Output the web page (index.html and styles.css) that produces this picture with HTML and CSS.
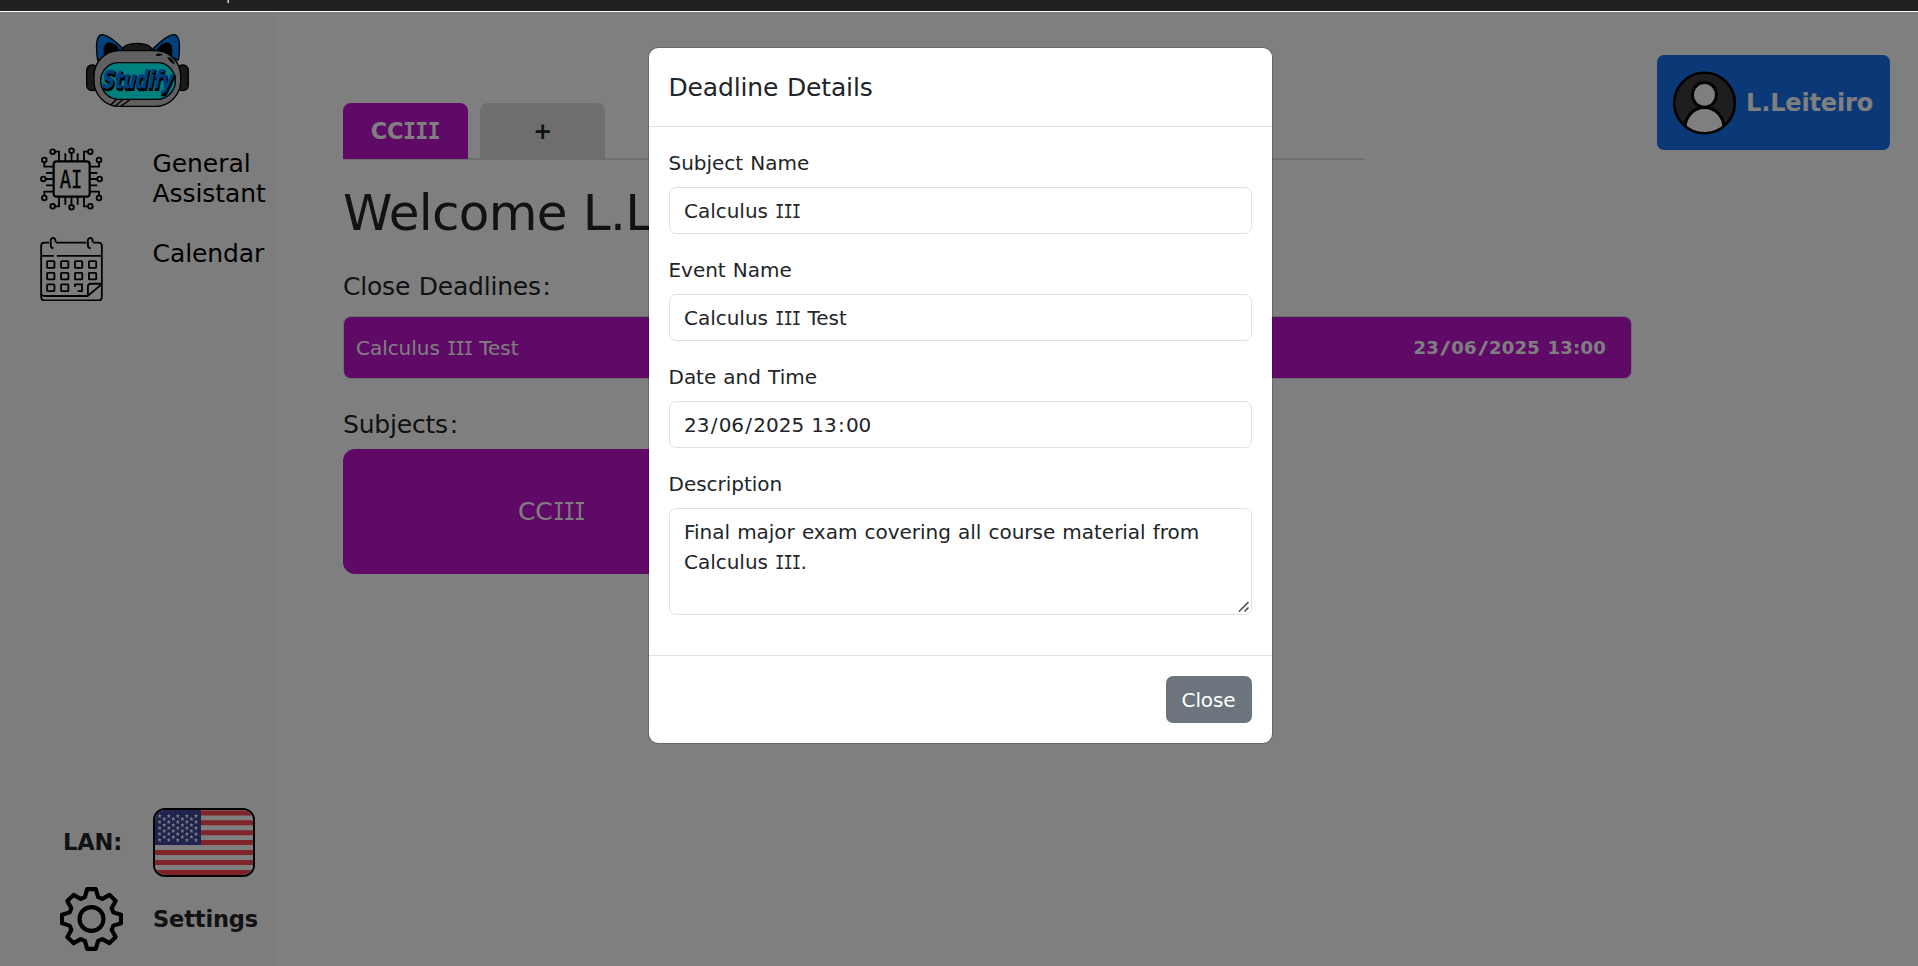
FILE: index.html
```html
<!DOCTYPE html>
<html lang="en">
<head>
<meta charset="utf-8">
<title>Studify</title>
<link rel="stylesheet" href="styles.css">
</head>
<body>
<div class="topbar"><span class="caret"></span></div>
<div class="app">
  <aside class="sidebar">
    <svg class="logo" viewBox="78 40 309 222" role="img" aria-label="Studify logo">
      <g stroke="#000" stroke-width="4" stroke-linejoin="round">
        <path d="M184 96 Q186 72 232 71 Q276 72 278 96Z" fill="#333"/>
        <path d="M113 122 Q104 62 118 48 Q134 34 190 88Z" fill="#0080f8"/>
        <path d="M355 122 Q364 62 350 48 Q334 34 278 88Z" fill="#0080f8"/>
        <path d="M134 112 Q128 66 152 71 Q172 76 180 98Z" fill="#000"/>
        <path d="M334 112 Q340 66 316 71 Q298 76 288 98Z" fill="#000"/>
        <rect x="80" y="136" width="34" height="77" rx="16" fill="#333"/>
        <rect x="351" y="136" width="34" height="77" rx="16" fill="#333"/>
        <rect x="102" y="93" width="260" height="167" rx="76" fill="#c0c0c0"/>
        <rect x="122" y="129" width="224" height="110" rx="54" fill="#0ff"/>
      </g>
      <path d="M288 104 q10-5 20 0 q-3 8-20 4z M321 111 q18 2 24 23 q-14-3-24-23z" fill="#111"/>
      <path d="M151 257l18-17M166 259l22-19M182 260l28-20" stroke="#000" stroke-width="4"/>
      <g transform="translate(126 205) skewX(-3)" class="logo-text">
        <text x="3" y="6" textLength="212" lengthAdjust="spacingAndGlyphs" fill="#000" stroke="#000" stroke-width="6">Studify</text>
        <text x="0" y="0" textLength="212" lengthAdjust="spacingAndGlyphs" fill="#0080f8" stroke="#0080f8" stroke-width="1">Studify</text>
      </g>
    </svg>
    <nav class="menu">
      <a class="menu-item">
        <svg class="menu-icon" viewBox="30 20 189 190" fill="none" stroke="#000" stroke-width="5.500">
          <rect x="71" y="62" width="108" height="106" rx="9" stroke-width="6.500"/>
          <circle cx="68" cy="33" r="7"/><circle cx="124.500" cy="30" r="7"/><circle cx="181" cy="33" r="7"/>
          <circle cx="68" cy="197" r="7"/><circle cx="124.500" cy="200" r="7"/><circle cx="181" cy="197" r="7"/>
          <circle cx="43" cy="58" r="7"/><circle cx="40" cy="115" r="7"/><circle cx="43" cy="172" r="7"/>
          <circle cx="207" cy="58" r="7"/><circle cx="209" cy="115" r="7"/><circle cx="207" cy="172" r="7"/>
          <path d="M75 33h12v28M106 38v23M124.500 37v24M143 38v23M174 33h-12v28M75 197h12v-28M106 192v-23M124.500 193v-24M143 192v-23M174 197h-12v-28"/>
          <path d="M43 65v13h28M48 97h23M47 115h24M48 134h23M43 165v-12h28M207 65v13h-28M202 97h-23M202 115h-23M202 134h-23M207 165v-12h-28"/>
          <text x="89" y="143" class="chip-text" textLength="68" lengthAdjust="spacingAndGlyphs">AI</text>
        </svg>
        <span>General Assistant</span>
      </a>
      <a class="menu-item">
        <svg class="menu-icon" viewBox="30 290 189 193" fill="none" stroke="#000" stroke-width="5.500">
          <path d="M57 307H43q-10 0-10 10V470q0 11 10 11H206q10 0 10-11V317q0-10-10-10H190M78 307h92M33 347h38M80 347h136"/>
          <path d="M76 306q2-13-7-13t-7 13v10q0 7 8 8M188 306q2-13-7-13t-7 13v10q0 7 8 8"/>
          <path d="M33 460q2 8 10 8H173L216 432M174 467V440q0-9 9-9h33"/>
          <path d="M135 441v-8h21v20h-13"/>
          <g>
            <rect x="51" y="363" width="22" height="20" rx="2"/><rect x="93" y="363" width="22" height="20" rx="2"/><rect x="135" y="363" width="22" height="20" rx="2"/><rect x="177" y="363" width="22" height="20" rx="2"/>
            <rect x="51" y="398" width="22" height="20" rx="2"/><rect x="93" y="398" width="22" height="20" rx="2"/><rect x="135" y="398" width="22" height="20" rx="2"/><rect x="177" y="398" width="22" height="20" rx="2"/>
            <rect x="51" y="433" width="22" height="20" rx="2"/><rect x="93" y="433" width="22" height="20" rx="2"/>
          </g>
        </svg>
        <span>Calendar</span>
      </a>
    </nav>
    <div class="side-foot">
      <div class="foot-row">
        <b class="lan">LAN:</b>
        <svg class="flag" viewBox="0 0 98 65">
          <defs><path id="st" fill="#fff" d="M0-2.200L.6-.7 2.100-.7 .9.300 1.400 1.900 0 1-1.400 1.900-.9.300-2.100-.7-.6-.7Z"/></defs>
          <rect width="98" height="65" fill="#fff"/>
          <path d="M0 3H98M0 12.800H98M0 22.700H98M0 32.600H98M0 42.500H98M0 52.400H98M0 62.400H98" stroke="#ff4b55" stroke-width="5"/>
          <rect width="46" height="35" fill="#41479b"/>
          <use href="#st" x="4.700" y="6"/><use href="#st" x="13.800" y="6"/><use href="#st" x="22.800" y="6"/><use href="#st" x="31.900" y="6"/><use href="#st" x="41" y="6"/>
          <use href="#st" x="9.200" y="9"/><use href="#st" x="18.300" y="9"/><use href="#st" x="27.400" y="9"/><use href="#st" x="36.400" y="9"/>
          <use href="#st" x="4.700" y="12"/><use href="#st" x="13.800" y="12"/><use href="#st" x="22.800" y="12"/><use href="#st" x="31.900" y="12"/><use href="#st" x="41" y="12"/>
          <use href="#st" x="9.200" y="15"/><use href="#st" x="18.300" y="15"/><use href="#st" x="27.400" y="15"/><use href="#st" x="36.400" y="15"/>
          <use href="#st" x="4.700" y="18"/><use href="#st" x="13.800" y="18"/><use href="#st" x="22.800" y="18"/><use href="#st" x="31.900" y="18"/><use href="#st" x="41" y="18"/>
          <use href="#st" x="9.200" y="21"/><use href="#st" x="18.300" y="21"/><use href="#st" x="27.400" y="21"/><use href="#st" x="36.400" y="21"/>
          <use href="#st" x="4.700" y="24"/><use href="#st" x="13.800" y="24"/><use href="#st" x="22.800" y="24"/><use href="#st" x="31.900" y="24"/><use href="#st" x="41" y="24"/>
          <use href="#st" x="9.200" y="27"/><use href="#st" x="18.300" y="27"/><use href="#st" x="27.400" y="27"/><use href="#st" x="36.400" y="27"/>
          <use href="#st" x="4.700" y="30"/><use href="#st" x="13.800" y="30"/><use href="#st" x="22.800" y="30"/><use href="#st" x="31.900" y="30"/><use href="#st" x="41" y="30"/>
        </svg>
      </div>
      <div class="foot-row">
        <svg class="gear" viewBox="-95 -96 190 192" fill="none" stroke="#000" stroke-width="12.500" stroke-linejoin="round">
          <path d="M-20-66L-13-90H13L20-66L32.500-60.800L54.400-72.800L72.800-54.400L60.800-32.500L66-20L89-13V13L66 20L60.800 32.500L72.800 54.400L54.400 72.800L32.500 60.800L20 66L13 90H-13L-20 66L-32.500 60.800L-54.400 72.800L-72.800 54.400L-60.800 32.500L-66 20L-89 13V-13L-66-20L-60.800-32.500L-72.800-54.400L-54.400-72.800L-32.500-60.800Z"/>
          <circle r="36"/>
        </svg>
        <b>Settings</b>
      </div>
    </div>
  </aside>

  <main class="main">
    <div class="tabs">
      <div class="tab active">CC<span class="num">III</span></div>
      <div class="tab">+</div>
    </div>
    <h1>Welcome L.Leiteiro</h1>
    <h2 class="h-deadlines">Close Deadlines<span class="pt">:</span></h2>
    <div class="deadline">
      <span>Calculus <span class="num">III</span> Test</span>
      <b>23<i>/</i>06<i>/</i>2025 13:00</b>
    </div>
    <h2 class="h-subjects">Subjects<span class="pt">:</span></h2>
    <div class="subject">CC<span class="num">III</span></div>
  </main>

  <button class="profile">
    <svg class="avatar" viewBox="0 0 63 64">
      <defs><clipPath id="face"><circle cx="31.500" cy="32" r="30.500"/></clipPath></defs>
      <circle cx="31.500" cy="32" r="30.500" fill="#3c3c3c"/>
      <g clip-path="url(#face)" fill="#fff" stroke="#000" stroke-width="3">
        <ellipse cx="31.500" cy="57" rx="19.500" ry="20.500"/>
        <ellipse cx="31.500" cy="23.800" rx="12" ry="12.300"/>
      </g>
      <circle cx="31.500" cy="32" r="30.300" fill="none" stroke="#000" stroke-width="2.600"/>
    </svg>
    <b>L.Leiteiro</b>
  </button>

  <div class="backdrop">
    <section class="modal">
      <header class="modal-head">Deadline Details</header>
      <div class="modal-body">
        <div class="field"><label>Subject Name</label><div class="control">Calculus <span class="num">III</span></div></div>
        <div class="field"><label>Event Name</label><div class="control">Calculus <span class="num">III</span> Test</div></div>
        <div class="field"><label>Date and Time</label><div class="control">23<i>/</i>06<i>/</i>2025 13<i>:</i>00</div></div>
        <div class="field"><label>Description</label>
          <div class="control area">Final major exam covering all course material from Calculus <span class="num">III</span>.
            <svg class="grip" viewBox="0 0 12 12" fill="none" stroke="#444" stroke-width="1.500"><path d="M1 10.500L10.500 1M6.500 10.500L10.500 6.500"/></svg>
          </div>
        </div>
      </div>
      <footer class="modal-foot"><button class="close">Close</button></footer>
    </section>
  </div>
</div>
</body>
</html>
```

FILE: styles.css
```css
* { box-sizing: border-box; }
body {
  margin: 0;
  height: 966px;
  overflow: hidden;
  font: 20px/30px Verdana, "DejaVu Sans", sans-serif;
  letter-spacing: -.007em;
  word-spacing: .04em;
  color: #212529;
  background: #fff;
}
button { font: inherit; letter-spacing: inherit; border: 0; }
h1, h2 { margin: 0; font-weight: 400; }
i { font-style: normal; padding: 0 .063em; }

/* Serifed roman numerals, narrowed to the proportions of the text face */
.num {
  display: inline-block;
  font-family: "DejaVu Sans Mono", monospace;
  line-height: 1;
  letter-spacing: -.06em;
  transform: scaleX(.777);
  transform-origin: 0 50%;
  margin-right: -.363em;
}
.pt { margin-left: .07em; }

.topbar {
  height: 12px;
  background: #202020;
  border-bottom: 1px solid #fff;
  padding-left: 227px;
  display: flex;
}
.caret { width: 2px; height: 3px; background: #d9c7a8; border-left: 1px solid #6d7fd0; }

.app { position: relative; display: flex; align-items: flex-start; height: 954px; }

.sidebar {
  flex: 0 0 275px;
  height: 954px;
  padding: 21px 0 15px;
  background: #fbfbfb;
  display: flex;
  flex-direction: column;
}
.logo { width: 103px; height: 74px; margin-left: 86px; overflow: visible; }
.logo-text { font: italic bold 74px "DejaVu Sans", sans-serif; letter-spacing: 0; }
.menu { margin-top: 40px; display: flex; flex-direction: column; gap: 27px; }
.menu-item { display: flex; gap: 49.5px; padding-left: 40px; height: 63px; font-size: 25px; color: #000; }
.menu-item span { padding-top: 2px; width: 118px; letter-spacing: -.003em; }
.menu-icon { flex: none; width: 63px; height: 64px; }
.chip-text { font: 72px "DejaVu Sans Mono", monospace; letter-spacing: 0; fill: #000; stroke: #000; stroke-width: 1px; }

.side-foot { margin-top: auto; display: flex; flex-direction: column; gap: 10px; font-size: 22.5px; }
.foot-row { display: grid; grid-template-columns: 93px auto; padding-left: 60px; align-items: center; justify-content: start; }
.lan { padding: 0 0 2px 3px; }
.flag { width: 102px; height: 69px; border: 2px solid #000; border-radius: 12px; }
.gear { width: 63px; height: 64px; }

.main { flex: 0 0 1357px; padding: 91px 0 0 68px; }
.tabs { display: flex; gap: 12px; width: 1021px; height: 57px; border-bottom: 2px solid #dcdcdc; }
.tab {
  width: 125px;
  height: 56px;
  line-height: 56px;
  border-radius: 8px 8px 0 0;
  background: #dcdcdc;
  text-align: center;
  font-size: 22.5px;
  font-weight: 700;
}
.tab.active { background: #c014d0; color: #fff; }
.tab .num { transform: scaleX(.96); letter-spacing: -.033em; margin-right: -.069em; }
h1 { margin-top: 23px; font-size: 50px; line-height: 60px; letter-spacing: -.014em; }
h2 { font-size: 25px; line-height: 30px; letter-spacing: -.008em; }
.h-deadlines { margin-top: 29px; }
.deadline {
  display: flex;
  justify-content: space-between;
  align-items: center;
  width: 1289px;
  height: 63px;
  margin-top: 14px;
  padding: 0 25px 0 12px;
  border: 1px solid #dcdcdc;
  border-radius: 8px;
  background: #c014d0;
  color: #fff;
  letter-spacing: -.002em;
}
.deadline b { font-size: 18px; letter-spacing: .014em; }
.deadline i { display: inline-block; padding: 0; margin: 0 .15em; line-height: 1; transform: scaleX(1.5); }
.h-subjects { margin-top: 31px; }
.subject {
  width: 416px;
  height: 125px;
  margin-top: 9px;
  line-height: 125px;
  border-radius: 12px;
  background: #c014d0;
  color: #fff;
  text-align: center;
  font-size: 25px;
}

.profile {
  display: flex;
  align-items: center;
  gap: 10px;
  width: 233px;
  height: 95px;
  margin: 43px 28px 0 auto;
  padding: 0 16px;
  border-radius: 7px;
  background: #1670ec;
  color: #fff;
  font-size: 24px;
  white-space: nowrap;
}
.avatar { flex: none; width: 63px; height: 64px; }

.backdrop { position: absolute; inset: 0; padding: 35px 0 0 648px; background: rgba(0, 0, 0, .5); }
.modal {
  width: 625px;
  background: #fff;
  background-clip: padding-box;
  border: 1px solid rgba(0, 0, 0, .175);
  border-radius: 10px;
}
.modal-head { height: 79px; padding: 21px 19.5px 18px; border-bottom: 1px solid #dee2e6; font-size: 25px; line-height: 37px; }
.modal-body { padding: 20px; letter-spacing: -.001em; }
.field { margin-bottom: 20px; }
.field label { display: block; padding-top: 1px; margin: 0 0 9px -.5px; }
.control { height: 47px; padding: 7.5px 14px; line-height: 30px; border: 1px solid #dee2e6; border-radius: 7px; }
.area { position: relative; height: 107px; }
.grip { position: absolute; right: 1px; bottom: 1px; width: 12px; height: 12px; }
.modal-foot { display: flex; justify-content: flex-end; padding: 20px; border-top: 1px solid #dee2e6; }
.close { width: 86px; height: 47px; padding: 0 1px 0 0; border-radius: 7px; background: #6c757d; color: #fff; }
```
